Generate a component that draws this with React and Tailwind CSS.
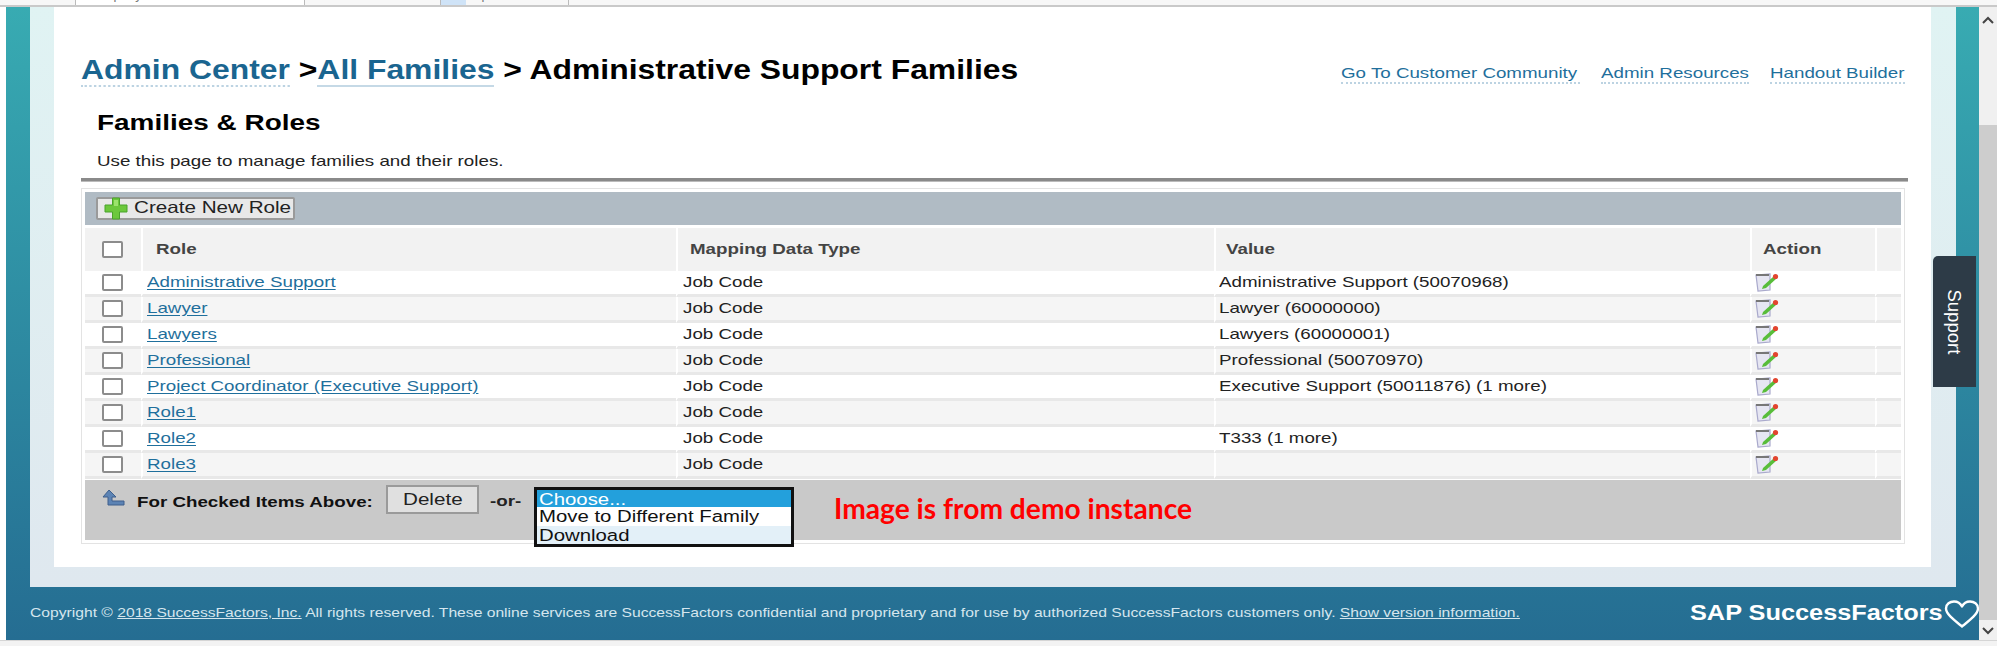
const ROWS = [
  ["Administrative Support", "Administrative Support (50070968)"],
  ["Lawyer", "Lawyer (60000000)"],
  ["Lawyers", "Lawyers (60000001)"],
  ["Professional", "Professional (50070970)"],
  ["Project Coordinator (Executive Support)", "Executive Support (50011876) (1 more)"],
  ["Role1", ""],
  ["Role2", "T333 (1 more)"],
  ["Role3", ""],
];

const GRID = "grid grid-cols-[56px_535px_538px_536px_125px_26px]";
const WIDE = "inline-block origin-left scale-x-[1.25] whitespace-nowrap";
const WIDE_TITLE = "inline-block origin-left scale-x-[1.18] whitespace-nowrap";
const WIDE_H2 = "inline-block origin-left scale-x-[1.27] whitespace-nowrap";
const WIDE_FOOT = "inline-block origin-left scale-x-[1.204] whitespace-nowrap";
const WIDE_LOGO = "inline-block origin-left scale-x-[1.15] whitespace-nowrap";

function Check() {
  return <span className="block w-[21px] h-[17px] bg-white border-2 border-[#8c8c8c] rounded-[2px]" />;
}

function EditIcon() {
  return (
    <svg width="24" height="19" viewBox="0 0 24 19" className="block">
      <path d="M1 2 L15 1 L15 17 L3 18 Z" fill="#e6e6f2" stroke="#a9a9cc" strokeWidth="1.2" />
      <rect x="1" y="1" width="13" height="2" fill="#777" />
      <path d="M8 13 L18 4 L21 6 L11 15 L7 16 Z" fill="#58bd3a" />
      <circle cx="20.5" cy="3.5" r="2.6" fill="#e2452f" />
    </svg>
  );
}

function PlusIcon() {
  return (
    <svg width="24" height="23" viewBox="0 0 24 23" className="block">
      <path d="M8.5 1 H15.5 V8 H23 V15 H15.5 V22 H8.5 V15 H1 V8 H8.5 Z" fill="#6cc83c" stroke="#49a32a" strokeWidth="1" />
      <path d="M10 3 H14 V9 H10 Z" fill="#9be36c" />
    </svg>
  );
}

function TurnUpIcon() {
  return (
    <svg width="24" height="17" viewBox="0 0 24 17" className="block">
      <path d="M8 1 L15 8 H11 V12 H23 V16 H7 V8 H2 Z" fill="#5c83b4" stroke="#3e5f8c" strokeWidth="1" />
    </svg>
  );
}

function Heart() {
  return (
    <svg width="36" height="29" viewBox="0 0 36 29" fill="none" className="block">
      <path d="M18 26.5 C10 20 2 14 2 8.5 C2 4 6 1.5 10 1.5 C13.5 1.5 16.5 3.5 18 6.5 C19.5 3.5 22.5 1.5 26 1.5 C30 1.5 34 4 34 8.5 C34 14 26 20 18 26.5 Z" stroke="#fff" strokeWidth="2.4" strokeLinejoin="round" />
    </svg>
  );
}

function Chevron({ up }) {
  return (
    <svg width="14" height="9" viewBox="0 0 14 9" fill="none" className="block">
      <path d={up ? "M2 7 L7 2 L12 7" : "M2 2 L7 7 L12 2"} stroke="#444" strokeWidth="2" />
    </svg>
  );
}

function HeaderCell({ children, className = "" }) {
  return (
    <div className={`h-[43px] bg-[#f2f2f2] border-l-2 border-white flex items-center text-[15px] font-bold text-[#444] ${className}`}>
      <span className={WIDE}>{children}</span>
    </div>
  );
}

function Row({ role, value, odd }) {
  const bg = odd ? "bg-[#f5f5f5]" : "bg-white";
  const cell = `h-[26px] border-b-[3px] border-[#e8e8e8] flex items-center ${bg}`;
  return (
    <div className={`${GRID} text-[15px] text-[#222]`}>
      <div className={`${cell} pl-[17px]`}><Check /></div>
      <div className={`${cell} border-l-2 border-l-white pl-[4px]`}>
        <a className={`${WIDE} text-[#1f6f9c] underline underline-offset-2`}>{role}</a>
      </div>
      <div className={`${cell} border-l-2 border-l-white pl-[5px]`}><span className={WIDE}>Job Code</span></div>
      <div className={`${cell} border-l-2 border-l-white pl-[3px]`}><span className={WIDE}>{value}</span></div>
      <div className={`${cell} border-l-2 border-l-white pl-[3px]`}><EditIcon /></div>
      <div className={`${cell} border-l-2 border-l-white`} />
    </div>
  );
}

export default function App() {
  return (
    <div className="w-[1997px] h-[646px] overflow-hidden bg-white flex flex-col font-['Liberation_Sans',Arial,sans-serif]">
      <div className="h-[7px] shrink-0 bg-[#f7f7f7] border-b-2 border-[#c9c9c9] overflow-hidden flex text-[13px] text-[#777] leading-[16px]">
        <div className="w-[76px] -mt-[13px] pl-[32px] border-r border-[#bbb]"><span>Name</span></div>
        <div className="w-[229px] -mt-[13px] pl-[10px] bg-white border-r border-[#bbb]"><span>Company</span></div>
        <div className="w-[136px] -mt-[13px] pl-[10px] border-r border-[#bbb]"><span>Previous Next</span></div>
        <div className="w-[25px] bg-[#cfe3f7]" />
        <div className="w-[103px] -mt-[13px] pl-[6px] border-r border-[#bbb]"><span>Updates</span></div>
      </div>

      <div className="flex-1 flex min-h-0">
        <div className="w-[6px] shrink-0 bg-white" />

        <div className="relative w-[1973px] shrink-0 bg-linear-to-b from-[#38abb2] to-[#256d92] flex flex-col pl-[24px]">
          <div className="w-[1926px] h-[580px] shrink-0 bg-linear-to-b from-[#e0f3f3] to-[#dfe8ef] pl-[24px] pr-[25px]">
            <div className="h-[560px] bg-white pl-[27px] pr-[23px] flex flex-col">
              <div className="h-[72px] mt-[50px] shrink-0 flex justify-between items-start">
                <div className="text-[27px] leading-[26px] font-bold text-black">
                  <span className={WIDE_TITLE}>
                    <a className="text-[#1a6590] border-b-2 border-dotted border-[#bcd3e2]">Admin Center</a>
                    {" >"}
                    <a className="text-[#1a6590] border-b-2 border-[#c5d9e6]">All Families</a>
                    {" > Administrative Support Families"}
                  </span>
                </div>
                <div className="flex gap-[21px] text-[15px] leading-[17px] text-[#1f6f9c] mt-[7px] mr-[3px]">
                  <a className="w-[239px] border-b-2 border-dotted border-[#bcd3e2] pb-[1px]"><span className={WIDE}>Go To Customer Community</span></a>
                  <a className="w-[148px] border-b-2 border-dotted border-[#bcd3e2] pb-[1px]"><span className={WIDE}>Admin Resources</span></a>
                  <a className="w-[135px] border-b-2 border-dotted border-[#bcd3e2] pb-[1px]"><span className={WIDE}>Handout Builder</span></a>
                </div>
              </div>

              <div className="pl-[16px] text-[22px] leading-[26px] font-bold text-black -mt-[19px] shrink-0">
                <span className={WIDE_H2}>Families &amp; Roles</span>
              </div>
              <div className="pl-[16px] text-[15px] leading-[18px] text-[#222] mt-[16px] shrink-0">
                <span className={WIDE}>Use this page to manage families and their roles.</span>
              </div>
              <div className="h-[4px] mt-[8px] shrink-0 bg-[#8a8a8a] border-b border-[#bbb]" />

              <div className="w-[1824px] mt-[6px] shrink-0 border border-[#e3e3e3] p-[3px]">
                <div className="h-[33px] bg-[#b0bbc4] pl-[11px] flex items-center">
                  <button className="w-[199px] h-[23px] bg-[#e8e8e8] border-2 border-[#9a9a9a] rounded-[2px] flex items-center pl-[6px] gap-[6px] text-[16.5px] text-[#222]">
                    <PlusIcon />
                    <span className={`${WIDE} -mt-[2px]`}>Create New Role</span>
                  </button>
                </div>
                <div className={`${GRID} mt-[3px]`}>
                  <div className="h-[43px] bg-[#f2f2f2] pl-[17px] flex items-center"><Check /></div>
                  <HeaderCell className="pl-[13px]">Role</HeaderCell>
                  <HeaderCell className="pl-[12px]">Mapping Data Type</HeaderCell>
                  <HeaderCell className="pl-[10px]">Value</HeaderCell>
                  <HeaderCell className="pl-[11px]">Action</HeaderCell>
                  <HeaderCell />
                </div>
                {ROWS.map(([role, value], i) => (
                  <Row key={role} role={role} value={value} odd={i % 2 === 1} />
                ))}
                <div className="h-[60px] mt-[1px] bg-[#c9c9c9] flex items-start">
                  <div className="ml-[16px] mt-[9px]"><TurnUpIcon /></div>
                  <div className="ml-[12px] mt-[14px] w-[249px] text-[15px] leading-[16px] font-bold text-[#111]">
                    <span className={WIDE}>For Checked Items Above:</span>
                  </div>
                  <button className="w-[93px] h-[29px] mt-[5px] bg-[#e0e0e0] border-2 border-[#9a9a9a] text-[16.5px] text-[#222] text-left pl-[15px]">
                    <span className={`${WIDE} -mt-[1px]`}>Delete</span>
                  </button>
                  <div className="ml-[11px] mt-[13px] w-[44px] text-[15px] leading-[16px] font-bold text-[#222]">
                    <span className={WIDE}>-or-</span>
                  </div>
                  <div className="w-[260px] h-[60px] mt-[7px] shrink-0 bg-white border-[3px] border-[#111] text-[16.3px] leading-[18px] text-[#111]">
                    <div className="h-[17px] bg-[#23a0dc] text-white pl-[2px]"><span className={WIDE}>Choose...</span></div>
                    <div className="h-[19px] bg-white pl-[2px]"><span className={WIDE}>Move to Different Family</span></div>
                    <div className="h-[18px] bg-[#e3f0f8] pl-[2px]"><span className={WIDE}>Download</span></div>
                  </div>
                  <div className="ml-[40px] mt-[14px] text-[28.2px] leading-[28px] font-bold text-[#f00] font-['Lato',sans-serif] whitespace-nowrap">
                    Image is from demo instance
                  </div>
                </div>
              </div>
            </div>
          </div>

          <div className="flex-1 min-h-0 flex items-center text-[13px] text-[#d5e6ee] relative">
            <div className="flex-1 whitespace-nowrap -mt-[2px]">
              <span className={WIDE_FOOT}>
                Copyright © <u>2018 SuccessFactors, Inc.</u> All rights reserved. These online services are SuccessFactors confidential and proprietary and for use by authorized SuccessFactors customers only. <u>Show version information.</u>
              </span>
            </div>
            <div className="absolute left-[1660px] top-[13px] text-[22px] leading-[26px] font-bold text-white whitespace-nowrap">
              <span className={WIDE_LOGO}>SAP SuccessFactors</span>
            </div>
            <div className="absolute right-[-1px] top-[13px]"><Heart /></div>
          </div>

          <div className="absolute left-[1927px] top-[249px] w-[43px] h-[131px] bg-[#2d3b47] rounded-tl-[5px] flex items-center justify-center">
            <span className="rotate-90 text-[18.5px] text-white whitespace-nowrap font-['Liberation_Sans',sans-serif]">Support</span>
          </div>
        </div>

        <div className="w-[18px] shrink-0 bg-[#f0f0f0] flex flex-col items-center justify-between relative">
          <div className="h-[118px] w-full flex flex-col items-center pt-[9px]"><Chevron up /></div>
          <div className="flex-1 w-full bg-[#cdcdcd]" />
          <div className="h-[20px] w-full flex items-center justify-center"><Chevron /></div>
        </div>
      </div>

      <div className="h-[6px] shrink-0 bg-[#f3f3f3] border-t border-[#d5d5d5]" />
    </div>
  );
}
